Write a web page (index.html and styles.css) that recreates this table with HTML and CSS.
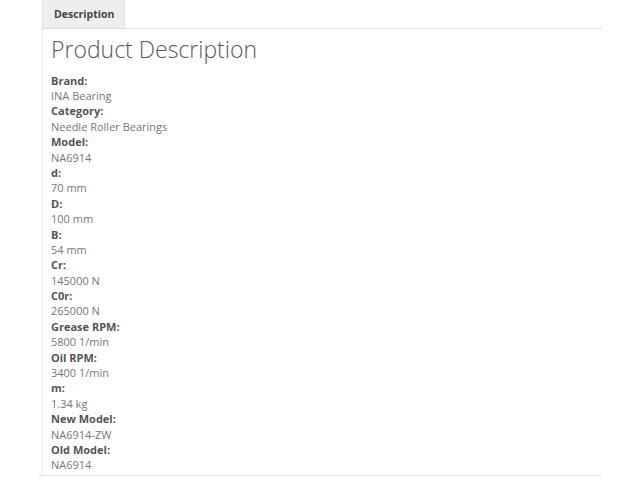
FILE: index.html
```html
<!DOCTYPE html>
<html lang="en">
<head>
    <meta charset="UTF-8">
    <title>Product Description</title>
    <link rel="stylesheet" href="styles.css">
</head>
<body>
    <div class="product-tabs">
        <div class="tab-list">
            <span class="tab active">Description</span>
        </div>
        <div class="tab-panel">
            <h2>Product Description</h2>
            <dl class="specs">
                <dt>Brand:</dt>
                <dd>INA Bearing</dd>
                <dt>Category:</dt>
                <dd>Needle Roller Bearings</dd>
                <dt>Model:</dt>
                <dd>NA6914</dd>
                <dt>d:</dt>
                <dd>70 mm</dd>
                <dt>D:</dt>
                <dd>100 mm</dd>
                <dt>B:</dt>
                <dd>54 mm</dd>
                <dt>Cr:</dt>
                <dd>145000 N</dd>
                <dt>C0r:</dt>
                <dd>265000 N</dd>
                <dt>Grease RPM:</dt>
                <dd>5800 1/min</dd>
                <dt>Oil RPM:</dt>
                <dd>3400 1/min</dd>
                <dt>m:</dt>
                <dd>1.34 kg</dd>
                <dt>New Model:</dt>
                <dd>NA6914-ZW</dd>
                <dt>Old Model:</dt>
                <dd>NA6914</dd>
            </dl>
        </div>
        <div class="tab-bottom"></div>
    </div>
</body>
</html>
```

FILE: styles.css
```css
body {
    margin: 0;
    background-color: #fff;
    font-family: "Open Sans", sans-serif;
    color: #555;
}

.product-tabs {
    margin-left: 42px;
    width: 560px;
}

.tab-list {
    display: flex;
    border-bottom: 1px solid #ddd;
}

.tab {
    display: block;
    height: 28px;
    line-height: 28px;
    padding: 0 11px;
    background-color: #eee;
    border-left: 1px solid #e2e2e2;
    border-right: 1px solid #e2e2e2;
    font-size: 10.5px;
    font-weight: bold;
    color: #444;
    box-sizing: border-box;
    width: 83px;
}

.tab-panel {
    border-left: 1px solid #ececec;
    padding: 7px 8px 2px 8px;
}

h2 {
    margin: 0 0 9px;
    font-size: 23px;
    font-weight: 300;
    line-height: 1.2;
    color: #5a5a5a;
}

.specs {
    margin: 0;
    font-size: 11px;
    line-height: 1.4;
}

.specs dt {
    font-weight: bold;
    color: #555;
}

.specs dd {
    margin: 0;
    color: #777;
}

.tab-bottom {
    margin-left: -4px;
    border-top: 1px solid #e5e5e5;
}
```
